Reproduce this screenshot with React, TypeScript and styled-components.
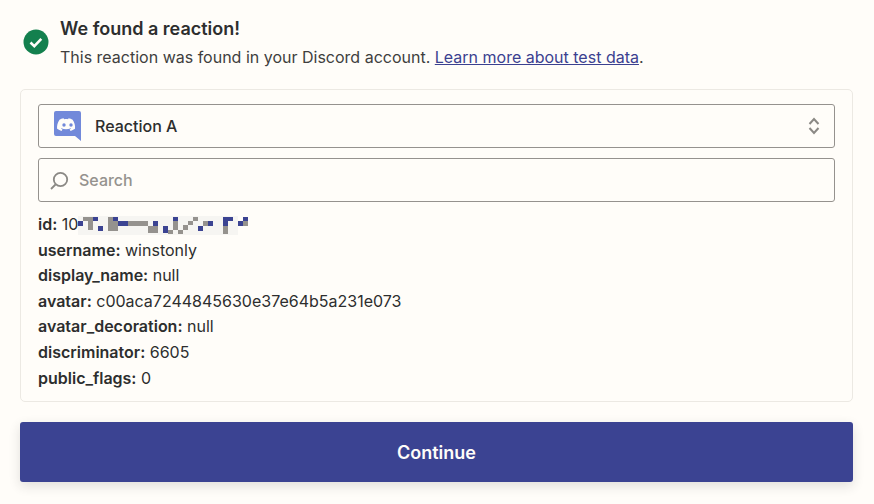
import React from 'react';
import styled, {createGlobalStyle} from 'styled-components';

const GlobalStyle = createGlobalStyle`
    html, body {
        margin: 0;
        padding: 0;
        background: #fffdf9;
        font-family: Inter, "Liberation Sans", sans-serif;
        color: #2d2e2e;
    }
`

const Page = styled.div`
    width: 874px;
    height: 504px;
    box-sizing: border-box;
    padding: 20px 21px 0 20px;
    overflow: hidden;
`

const Notice = styled.div`
    display: flex;
    align-items: center;
    gap: 11px;
    padding-left: 3px;
    height: 49px;
`

const NoticeBody = styled.div`
    padding-bottom: 3px;
`

const NoticeTitle = styled.div`
    font-size: 18px;
    font-weight: 600;
    line-height: 20px;
`

const NoticeText = styled.div`
    font-size: 16px;
    line-height: 20px;
    margin-top: 8px;
    color: #403f3e;
`

const TestLink = styled.a`
    color: #3b4190;
    text-decoration: underline;
`

const CheckSvg = styled.svg`
    align-self: flex-start;
    margin-top: 9px;
`

const Card = styled.div`
    margin-top: 20px;
    height: 313px;
    box-sizing: border-box;
    padding: 14px 17px 0;
    border: 1px solid #ece9e3;
    border-radius: 5px;
`

const Field = styled.div`
    display: flex;
    align-items: center;
    height: 44px;
    box-sizing: border-box;
    border: 1px solid #95928e;
    border-radius: 3px;
    margin-bottom: 10px;
    font-size: 16px;
    font-weight: 500;
`

const SelectField = styled(Field)`
    padding: 0 12px 0 15px;
`

const SelectLabel = styled.span`
    flex: 1;
    margin-left: 14px;
`

const SearchField = styled(Field)`
    padding-left: 10px;
    color: #95928e;
`

const SearchLabel = styled.span`
    margin-left: 10px;
`

const Rows = styled.div`
    margin-top: 9px;
    font-size: 16px;
    line-height: 25.6px;
`

const Row = styled.div`
    height: 25.6px;
    white-space: pre;
`

const Key = styled.b`
    font-weight: 600;
`

const MosaicSvg = styled.svg`
    vertical-align: -6px;
`

const Continue = styled.button`
    display: block;
    width: 100%;
    height: 60px;
    margin-top: 20px;
    border: 0;
    border-radius: 3px;
    background: #3b4392;
    color: #fffdf9;
    font-family: inherit;
    font-size: 18px;
    font-weight: 600;
    box-shadow: 0 4px 12px rgba(45, 46, 46, 0.14);
`

const rows: [string, string][] = [
    ['username', 'winstonly'],
    ['display_name', 'null'],
    ['avatar', 'c00aca7244845630e37e64b5a231e073'],
    ['avatar_decoration', 'null'],
    ['discriminator', '6605'],
    ['public_flags', '0'],
]

const blue = '#3b4392'
const grey = '#95928e'

// blurred id, in page coordinates: x, y, width, height, colour
const mosaic: [number, number, number, number, string][] = [
    [80, 219, 5, 5, blue],
    [85, 215, 10, 4, grey],
    [90, 219, 5, 9, grey],
    [95, 215, 5, 4, blue],
    [100, 224, 5, 5, blue],
    [110, 215, 5, 4, grey],
    [115, 215, 5, 4, blue],
    [110, 219, 10, 10, grey],
    [120, 219, 10, 5, blue],
    [130, 219, 20, 5, grey],
    [155, 219, 5, 5, blue],
    [150, 224, 10, 7, grey],
    [165, 224, 5, 7, blue],
    [170, 228, 5, 4, grey],
    [175, 215, 5, 4, blue],
    [175, 219, 5, 9, grey],
    [180, 228, 5, 4, grey],
    [185, 223, 5, 5, grey],
    [190, 219, 5, 4, grey],
    [195, 215, 5, 4, grey],
    [200, 224, 5, 5, blue],
    [205, 219, 5, 5, grey],
    [210, 219, 5, 5, blue],
    [225, 215, 10, 4, blue],
    [225, 219, 5, 5, blue],
    [225, 224, 5, 8, grey],
    [245, 215, 5, 4, blue],
    [240, 219, 5, 5, blue],
    [245, 219, 5, 5, grey],
]

const CheckIcon = () => (
    <CheckSvg width="26" height="26" viewBox="0 0 26 26">
        <circle cx="13" cy="13" r="12.5" fill="#13804e"/>
        <path d="M7.5 13.5l3.8 3.6 7-7.2" fill="none" stroke="#fffdf9" strokeWidth="2.6"/>
    </CheckSvg>
)

const DiscordIcon = () => (
    <svg width="27" height="30" viewBox="0 0 27 30">
        <path d="M2 0h23a2 2 0 0 1 2 2v28l-6-5H2a2 2 0 0 1-2-2V2a2 2 0 0 1 2-2z" fill="#7289da"/>
        <path d="M9.600 7.300c-1.500.3-2.900.7-4.100 1.500-2 3-2.700 6-2.400 9 1.500 1.100 3 1.700 4.400 2.100l1-1.500c-.6-.2-1.100-.5-1.600-.8l.4-.3c3.100 1.400 6.500 1.400 9.500 0l.4.3c-.5.3-1 .6-1.600.8l1 1.500c1.400-.4 2.900-1 4.400-2.100.4-3.500-.6-6.500-2.400-9-1.200-.8-2.600-1.200-4.100-1.500l-.4.9c-1.300-.2-2.700-.2-4 0z" fill="#fffdf9"/>
        <circle cx="10" cy="14" r="1.700" fill="#7289da"/>
        <circle cx="17" cy="14" r="1.700" fill="#7289da"/>
    </svg>
)

const ChevronsIcon = () => (
    <svg width="16" height="20" viewBox="0 0 16 20" fill="none" stroke="#8b8985" strokeWidth="2">
        <path d="M3.500 8L8 3l4.500 5M3.500 12L8 17l4.500-5"/>
    </svg>
)

const SearchIcon = () => (
    <svg width="20" height="20" viewBox="0 0 20 20" fill="none" stroke="#8b8985" strokeWidth="1.800">
        <circle cx="11.500" cy="9.500" r="6.700"/>
        <path d="M6.500 14.500L2 19"/>
    </svg>
)

const Mosaic = () => (
    <MosaicSvg width="170" height="20" viewBox="80 214 170 20">
        <rect x="80" y="214" width="160" height="19" fill="#f6f5f2"/>
        {mosaic.map(([x, y, w, h, fill], i) => <rect key={i} x={x} y={y} width={w} height={h} fill={fill}/>)}
    </MosaicSvg>
)

export default function App() {
    return (
        <Page>
            <GlobalStyle/>
            <Notice>
                <CheckIcon/>
                <NoticeBody>
                    <NoticeTitle>We found a reaction!</NoticeTitle>
                    <NoticeText>
                        This reaction was found in your Discord account. <TestLink>Learn more about test data</TestLink>.
                    </NoticeText>
                </NoticeBody>
            </Notice>
            <Card>
                <SelectField>
                    <DiscordIcon/>
                    <SelectLabel>Reaction A</SelectLabel>
                    <ChevronsIcon/>
                </SelectField>
                <SearchField>
                    <SearchIcon/>
                    <SearchLabel>Search</SearchLabel>
                </SearchField>
                <Rows>
                    <Row><Key>id:</Key> 10<Mosaic/></Row>
                    {rows.map(([key, value]) => (
                        <Row key={key}><Key>{key}:</Key> {value}</Row>
                    ))}
                </Rows>
            </Card>
            <Continue>Continue</Continue>
        </Page>
    );
}
